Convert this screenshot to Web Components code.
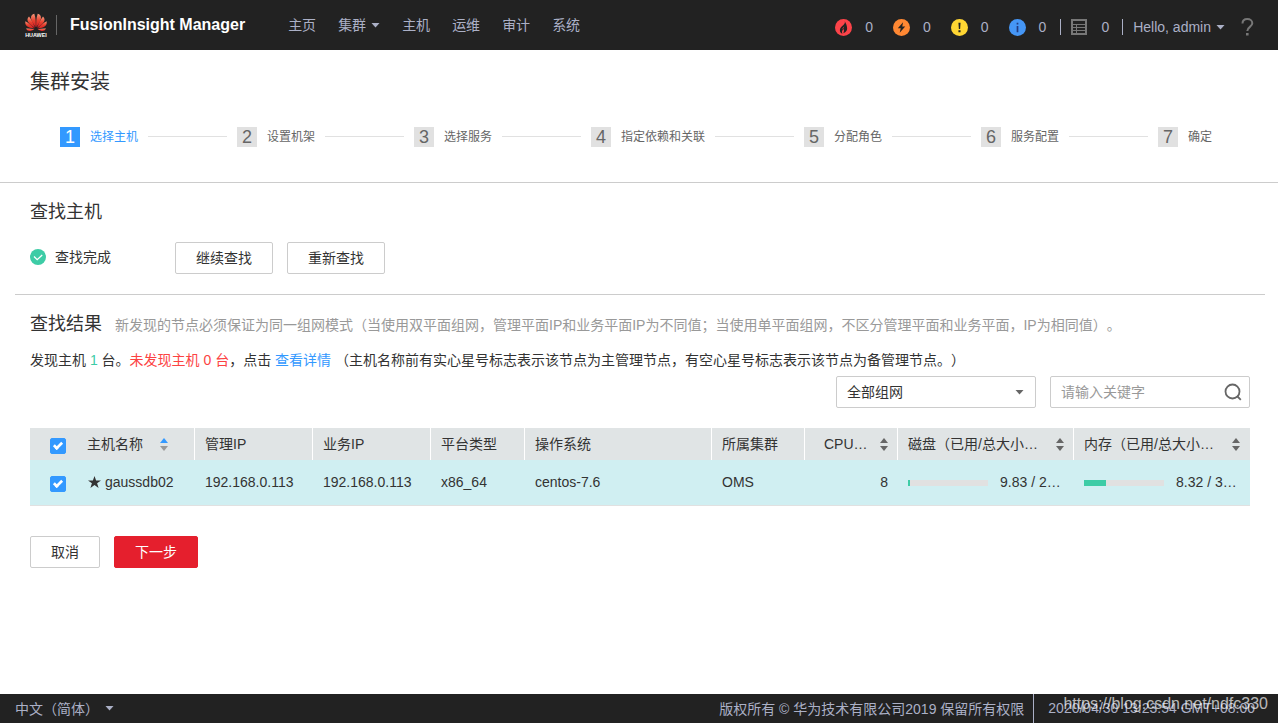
<!DOCTYPE html>
<html lang="zh-CN">
<head>
<meta charset="utf-8">
<title>FusionInsight Manager</title>
<style>
  html, body { margin: 0; }
  body { font: 14px/20px "Liberation Sans", "Noto Sans CJK SC", sans-serif; color: #333; background: #fff; text-spacing-trim: space-all; }
</style>
</head>
<body>
<app-shell>
  <app-header slot="header"></app-header>
  <install-steps current="1"></install-steps>
  <host-search></host-search>
  <host-results></host-results>
  <app-footer slot="footer"></app-footer>
</app-shell>

<script>
const define = (name, markup, setup) => {
  customElements.define(name, class extends HTMLElement {
    connectedCallback() {
      if (this.shadowRoot) return;
      const root = this.attachShadow({ mode: 'open' });
      root.innerHTML = typeof markup === 'function' ? markup(this) : markup;
      if (setup) setup(this, root);
    }
  });
};

/* Small downward triangle */
define('caret-down', `
  <style>
    :host { display: block; width: 9px; height: 5px; }
    svg { display: block; }
  </style>
  <svg width="9" height="5" viewBox="0 0 9 5" aria-hidden="true"><path d="M.5 0h8L4.500 4.500z" fill="currentColor"/></svg>`);

/* Up/down sort arrows; "asc" highlights the upper one */
define('sort-arrows', el => `
  <style>
    :host { display: block; flex: none; width: 8px; height: 13px; }
    svg { display: block; }
  </style>
  <svg width="8" height="13" viewBox="0 0 8 13" aria-hidden="true">
    <path d="M0 5L4 0l4 5z" fill="${el.hasAttribute('asc') ? '#39f' : '#666'}"/>
    <path d="M0 8h8l-4 5z" fill="${el.hasAttribute('asc') ? '#999' : '#666'}"/>
  </svg>`);

define('ui-button', el => `
  <style>
    :host { display: block; flex: none; }
    button { display: block; box-sizing: border-box; height: 32px; padding: 0 20px; border: 1px solid #ccc; border-radius: 2px;
      background: #fff; color: #333; font: inherit; cursor: pointer; }
    button.primary { background: #e51f2d; border-color: #e51f2d; color: #fff; }
  </style>
  <button type="button" class="${el.getAttribute('kind') || ''}"><slot></slot></button>`);

define('check-box', el => `
  <style>
    :host { display: block; width: 16px; height: 16px; }
    input { appearance: none; display: flex; justify-content: center; box-sizing: border-box; margin: 0;
      width: 16px; height: 16px; border: 1px solid #999; border-radius: 2px; background: #fff; }
    input:checked { border-color: #39f; background: #39f; }
    input:checked::before { content: ""; box-sizing: border-box; width: 6px; height: 10px; margin-top: 1px;
      border: solid #fff; border-width: 0 3px 3px 0; transform: rotate(45deg) scale(.9); }
  </style>
  <input type="checkbox" checked aria-label="${el.getAttribute('label')}">`);

define('brand-logo', `
  <style>
    :host { display: block; flex: none; }
    svg { display: block; }
  </style>
  <svg width="24" height="24" viewBox="0 0 240 240" role="img" aria-label="HUAWEI">
    <defs>
      <linearGradient id="g" x1="0" y1="0" x2="0" y2="1"><stop offset="0" stop-color="#f59a7c"/><stop offset=".5" stop-color="#e8402f"/><stop offset="1" stop-color="#d01a20"/></linearGradient>
    </defs>
    <g fill="url(#g)">
      <path d="M117 142C120 100 118 50 103 8 82 12 68 28 70 52c3 30 27 60 47 90z"/>
      <path d="M123 142C120 100 122 50 137 8c21 4 35 20 33 44-3 30-27 60-47 90z"/>
      <path d="M110 148C94 106 76 68 50 36 34 52 30 68 40 88c14 26 42 44 70 60z"/>
      <path d="M130 148c16-42 34-80 60-112 16 16 20 32 10 52-14 26-42 44-70 60z"/>
      <path d="M105 155C78 128 50 102 14 82c-6 24 4 44 24 56 20 12 44 16 67 17z"/>
      <path d="M135 155c27-27 55-53 91-73 6 24-4 44-24 56-20 12-44 16-67 17z"/>
      <path d="M104 162c-28-4-58-8-84-6 10 20 26 28 44 24 14-4 28-10 40-18z"/>
      <path d="M136 162c28-4 58-8 84-6-10 20-26 28-44 24-14-4-28-10-40-18z"/>
    </g>
    <text x="120" y="236" text-anchor="middle" font-family="Liberation Sans, sans-serif" font-weight="700" font-size="54" fill="#fff">HUAWEI</text>
  </svg>`);

const ALARMS = {
  critical: ['#fc4349', '<path fill="#222" d="M9.200 2C9.800 4 8.500 5 6.800 6.600 5.400 8 4.600 9 4.600 10.500c0 1.500.9 2.800 2.400 3.300C6 12 6.800 11 8 9.500c.8 1.200.4 2.200-.1 3.800 2.600-1 3.700-2.500 3.500-4.800-.1-2.300-1-4.500-2.200-6.500z"/><path fill="#fc4349" d="M8.700 7c-.9 1-1.900 1.700-1.700 2.900.6-.9 1.400-1.300 1.700-2.900z"/>'],
  major: ['#ff8833', '<path fill="#222" d="M9.500 3L4.500 8.800h2.800L6.300 13l5.200-6H8.700z"/>'],
  minor: ['#ffd633', '<path fill="#222" d="M7 3.500h2L8.600 9.500H7.400zM7 10.500h2v2H7z"/>'],
  info: ['#4596f5', '<path fill="#223a80" d="M7.200 3.500h1.600v1.700H7.200zM7.200 6.500h1.600v6H7.200z"/>'],
};
define('alarm-count', el => {
  const [color, glyph] = ALARMS[el.getAttribute('level')];
  return `
  <style>
    :host { display: block; }
    a { display: flex; align-items: center; gap: 13px; color: inherit; text-decoration: none; }
    svg { display: block; }
  </style>
  <a href="#alarms"><svg width="17" height="17" viewBox="0 0 16 16" aria-hidden="true"><circle cx="8" cy="8" r="8" fill="${color}"/>${glyph}</svg><slot></slot></a>`;
});

define('app-header', `
  <style>
    :host { display: flex; align-items: center; height: 50px; padding: 0 24px; background: #222; color: #abb0c6; }
    a { color: inherit; text-decoration: none; }
    .brand { display: flex; align-items: center; }
    .title { margin-left: 8px; padding-left: 13px; border-left: 1px solid #666; color: #fff; font-size: 16px; font-weight: 700; white-space: nowrap; }
    nav { display: flex; gap: 22px; margin-left: 43px; white-space: nowrap; }
    .drop { display: flex; align-items: center; gap: 5px; }
    .tools { display: flex; align-items: center; margin-left: auto; padding-top: 4px; white-space: nowrap; }
    .alarms { display: flex; gap: 20px; margin-right: 14px; }
    .bar { width: 1px; height: 16px; background: #abb0c6; }
    .tasks { display: flex; align-items: center; gap: 14px; margin: 0 13px 0 10px; }
    .user { margin: 0 16px 0 10px; padding: 0; border: 0; background: none; color: inherit; font: inherit; }
    svg { display: block; }
  </style>
  <div class="brand"><brand-logo></brand-logo><span class="title">FusionInsight Manager</span></div>
  <nav>
    <a href="#home">主页</a><a href="#cluster" class="drop">集群<caret-down></caret-down></a><a href="#hosts">主机</a>
    <a href="#om">运维</a><a href="#audit">审计</a><a href="#system">系统</a>
  </nav>
  <div class="tools">
    <div class="alarms">
      <alarm-count level="critical">0</alarm-count><alarm-count level="major">0</alarm-count>
      <alarm-count level="minor">0</alarm-count><alarm-count level="info">0</alarm-count>
    </div>
    <span class="bar"></span>
    <a href="#tasks" class="tasks"><svg width="16" height="16" viewBox="0 0 16 16" fill="none" stroke="#777" aria-hidden="true"><path stroke-width="2" d="M1 1h14v14H1z"/><path d="M2 5.500h12M2 8.500h12M2 11.500h12M5.500 5v9"/></svg>0</a>
    <span class="bar"></span>
    <button type="button" class="user drop">Hello, admin<caret-down></caret-down></button>
    <a href="#help" aria-label="Help"><svg width="13" height="18" viewBox="0 0 13 18" aria-hidden="true"><path d="M1.500 5.500C1.500 2.800 3.500 1 6.300 1c2.900 0 5 1.700 5 4.200 0 3.600-5 3.800-5 7.800" fill="none" stroke="#777" stroke-width="2"/><path d="M5 15h2.600v2.500H5z" fill="#777"/></svg></a>
  </div>`);

define('app-footer', `
  <style>
    :host { display: flex; align-items: center; height: 29px; padding-left: 15px; background: #222; color: #abb0c6; white-space: nowrap; position: relative; }
    button { display: flex; align-items: center; gap: 6px; padding: 0; border: 0; background: none; color: inherit; font: inherit; }
    .copy { margin-left: auto; padding-right: 9px; }
    time { padding: 0 23px 0 14px; border-left: 1px solid #abb0c6; line-height: 29px; }
    .mark { position: absolute; right: 10px; top: 0; font-size: 16px; color: rgba(255,255,255,.7); }
  </style>
  <button type="button">中文（简体）<caret-down></caret-down></button>
  <span class="copy">版权所有 © 华为技术有限公司2019 保留所有权限</span>
  <time>2020/04/30 13:23:54 GMT+08:00</time>
  <span class="mark">https://blog.csdn.net/ndfc330</span>`);

define('app-shell', `
  <style>
    :host { display: flex; flex-direction: column; min-height: 100vh; }
    main { flex: 1; }
  </style>
  <slot name="header"></slot>
  <main><slot></slot></main>
  <slot name="footer"></slot>`);

const STEPS = ['选择主机', '设置机架', '选择服务', '指定依赖和关联', '分配角色', '服务配置', '确定'];
define('install-steps', el => `
  <style>
    :host { display: block; padding: 17px 30px 35px; border-bottom: 1px solid #ccc; }
    h1 { margin: 0; font-size: 20px; line-height: 30px; font-weight: 400; }
    ol { display: flex; align-items: center; margin: 30px 36px 0 30px; padding: 0; list-style: none; }
    li { display: flex; align-items: center; gap: 10px; font-size: 12px; color: #666; white-space: nowrap; }
    li:not(:last-child) { flex: 1 1 auto; }
    li:not(:last-child)::after { content: ""; flex: 1; height: 1px; margin: 0 10px 1px 0; background: #e1e1e1; }
    b { width: 20px; background: #e1e1e1; font-size: 18px; font-weight: 400; line-height: 20px; text-align: center; }
    .on { color: #39f; }
    .on b { background: #39f; color: #fff; }
  </style>
  <h1>集群安装</h1>
  <ol>${STEPS.map((s, i) => `<li class="${i + 1 == el.getAttribute('current') ? 'on' : ''}"><b>${i + 1}</b><span>${s}</span></li>`).join('')}</ol>`);

define('host-search', `
  <style>
    :host { display: block; margin: 0 13px 0 15px; padding: 14px 15px 20px; border-bottom: 1px solid #ccc; }
    h2 { margin: 0 0 15px; font-size: 18px; line-height: 30px; font-weight: 400; }
    .row { display: flex; align-items: center; gap: 14px; }
    .status { display: flex; align-items: center; gap: 9px; width: 131px; padding-bottom: 2px; }
    svg { display: block; }
  </style>
  <h2>查找主机</h2>
  <div class="row">
    <div class="status"><svg width="16" height="16" viewBox="0 0 16 16" aria-hidden="true"><circle cx="8" cy="8" r="8" fill="#3dcca6"/><path d="M4 7.500l3.200 3.200 5-4.700" fill="none" stroke="#fff" stroke-width="1.300"/></svg>查找完成</div>
    <ui-button>继续查找</ui-button><ui-button>重新查找</ui-button>
  </div>`);

define('result-filters', `
  <style>
    :host { display: flex; justify-content: flex-end; gap: 14px; }
    .field { display: grid; align-items: center; width: 200px; }
    .field > * { grid-area: 1 / 1; }
    select, input { appearance: none; box-sizing: border-box; width: 100%; height: 32px; margin: 0; padding: 0 10px; border: 1px solid #ccc; border-radius: 2px;
      background: #fff; color: #333; font: inherit; }
    input::placeholder { color: #999; opacity: 1; }
    caret-down, svg { justify-self: end; pointer-events: none; }
    caret-down { margin-right: 12px; color: #666; }
    svg { margin-right: 8px; }
  </style>
  <div class="field"><select aria-label="组网"><option>全部组网</option></select><caret-down></caret-down></div>
  <div class="field"><input type="text" placeholder="请输入关键字" aria-label="关键字">
    <svg width="18" height="18" viewBox="0 0 18 18" fill="none" stroke="#666" stroke-width="1.800" aria-hidden="true"><circle cx="8.500" cy="8.500" r="7"/><path d="M13 13l3.800 3.800"/></svg></div>`);

define('usage-bar', el => `
  <style>
    :host { display: flex; align-items: center; gap: 12px; }
    progress { appearance: none; display: block; width: 80px; height: 6px; margin-top: 2px; border: 0; background: #e1e1e1; }
    progress::-webkit-progress-bar { background: #e1e1e1; }
    progress::-webkit-progress-value { background: #3dcca6; }
  </style>
  <progress max="80" value="${el.getAttribute('value')}" aria-label="${el.getAttribute('label')}"></progress><slot></slot>`);

define('host-table', `
  <style>
    :host { display: block; }
    table { width: 100%; table-layout: fixed; border-collapse: separate; border-spacing: 0; }
    th, td { box-sizing: border-box; padding: 0 10px; text-align: left; font-weight: 400; white-space: nowrap; }
    th { height: 32px; background: #e0e4e5; border-right: 1px solid #fff; }
    th:first-child, th:last-child { border-right: 0; }
    td { height: 46px; padding-bottom: 2px; background: #d0eff2; border-bottom: 1px solid #e1e1e1; }
    th:first-child, td:first-child { padding: 4px 0 0 20px; }
    td:first-child { padding-top: 2px; }
    .sort { display: flex; align-items: center; justify-content: space-between; }
    .name { gap: 17px; justify-content: flex-start; }
    .num { text-align: right; }
    th.num { padding-left: 19px; }
    .wide { padding-right: 9px; }
    .host { display: flex; align-items: center; gap: 4px; padding-left: 1px; }
    svg { display: block; }
    .check { width: 47px; } .ip { width: 118px; } .type { width: 94px; } .small { width: 93px; } .use { width: 176px; }
  </style>
  <table>
    <colgroup><col class="check"><col class="ip"><col class="ip"><col class="ip"><col class="type"><col><col class="small"><col class="small"><col class="use"><col class="use"></colgroup>
    <thead><tr>
      <th><check-box label="全选"></check-box></th>
      <th><div class="sort name">主机名称<sort-arrows asc></sort-arrows></div></th>
      <th>管理IP</th><th>业务IP</th><th>平台类型</th><th>操作系统</th><th>所属集群</th>
      <th class="num wide"><div class="sort">CPU…<sort-arrows></sort-arrows></div></th>
      <th class="wide"><div class="sort">磁盘（已用/总大小…<sort-arrows></sort-arrows></div></th>
      <th><div class="sort">内存（已用/总大小…<sort-arrows></sort-arrows></div></th>
    </tr></thead>
    <tbody><tr>
      <td><check-box label="gaussdb02"></check-box></td>
      <td><div class="host"><svg width="13" height="12" viewBox="0 0 13 12" aria-hidden="true"><path d="M6.500 0l1.600 4.400H13L9.100 7.200l1.500 4.800-4.100-2.900L2.400 12l1.500-4.800L0 4.400h4.900z" fill="#333"/></svg>gaussdb02</div></td>
      <td>192.168.0.113</td><td>192.168.0.113</td><td>x86_64</td><td>centos-7.6</td><td>OMS</td><td class="num">8</td>
      <td><usage-bar value="2" label="磁盘">9.83 / 2…</usage-bar></td>
      <td><usage-bar value="22" label="内存">8.32 / 3…</usage-bar></td>
    </tr></tbody>
  </table>`);

define('host-results', `
  <style>
    :host { display: block; padding: 14px 28px 30px 30px; }
    .head { display: flex; align-items: baseline; gap: 13px; }
    h2 { margin: 0; font-size: 18px; line-height: 30px; font-weight: 400; white-space: nowrap; }
    .hint { color: #999; }
    p { margin: 11px 0 6px; }
    a { color: #39f; text-decoration: none; }
    .ok { color: #3dcca6; }
    .bad { color: #fc4343; }
    host-table { margin: 20px 0 30px; }
    .actions { display: flex; gap: 14px; }
  </style>
  <div class="head"><h2>查找结果</h2><span class="hint">新发现的节点必须保证为同一组网模式（当使用双平面组网，管理平面IP和业务平面IP为不同值；当使用单平面组网，不区分管理平面和业务平面，IP为相同值）。</span></div>
  <p>发现主机 <span class="ok">1</span> 台。<span class="bad">未发现主机 0 台</span>，点击 <a href="#detail">查看详情</a> （主机名称前有实心星号标志表示该节点为主管理节点，有空心星号标志表示该节点为备管理节点。）</p>
  <result-filters></result-filters>
  <host-table></host-table>
  <div class="actions"><ui-button>取消</ui-button><ui-button kind="primary">下一步</ui-button></div>`);
</script>
</body>
</html>
